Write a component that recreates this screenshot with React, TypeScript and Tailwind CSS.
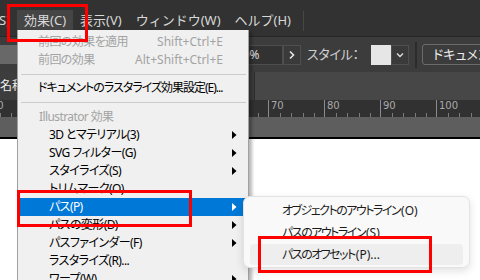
import React from 'react';

const ui = "font-['Noto_Sans','Noto_Sans_CJK_JP',sans-serif]";
const palt = "[font-feature-settings:'palt']";

function Arrow({ white }: { white?: boolean }) {
  return (
    <svg width="5" height="8" viewBox="0 0 5 8" className="absolute right-[9px] top-[5px]">
      <polygon points="0,0 4.5,4 0,8" fill={white ? '#ffffff' : '#000000'} />
    </svg>
  );
}

type Item =
  | { kind: 'sep'; h: number }
  | { kind: 'item'; label: string; indent?: boolean; disabled?: boolean; shortcut?: string; sub?: boolean; active?: boolean; header?: boolean; tight?: boolean };

const items: Item[] = [
  { kind: 'item', label: '前回の効果を適用', disabled: true, shortcut: 'Shift+Ctrl+E' },
  { kind: 'item', label: '前回の効果', disabled: true, shortcut: 'Alt+Shift+Ctrl+E' },
  { kind: 'sep', h: 10 },
  { kind: 'item', label: 'ドキュメントのラスタライズ効果設定(E)...', tight: true },
  { kind: 'sep', h: 11 },
  { kind: 'item', label: 'Illustrator 効果', header: true, disabled: true },
  { kind: 'item', label: '3D とマテリアル(3)', indent: true, sub: true },
  { kind: 'item', label: 'SVG フィルター(G)', indent: true, sub: true },
  { kind: 'item', label: 'スタイライズ(S)', indent: true, sub: true },
  { kind: 'item', label: 'トリムマーク(O)', indent: true },
  { kind: 'item', label: 'パス(P)', indent: true, sub: true, active: true },
  { kind: 'item', label: 'パスの変形(D)', indent: true, sub: true },
  { kind: 'item', label: 'パスファインダー(F)', indent: true, sub: true },
  { kind: 'item', label: 'ラスタライズ(R)...', indent: true },
  { kind: 'item', label: 'ワープ(W)', indent: true, sub: true },
];

const subItems = [
  { kana: 'オブジェクトのアウトライン', rest: '(O)' },
  { kana: 'パスのアウトライン', rest: '(S)' },
  { kana: 'パスのオフセット', rest: '(P)...', hover: true },
];

function RulerSegment({ label }: { label: string }) {
  return (
    <div className="relative w-[56px] shrink-0 h-full border-l border-[#8c8c8c]">
      <span className="block pl-[2px] pt-[1px] text-[10px] leading-[10px] text-[#a9a9a9] font-['DejaVu_Sans',sans-serif]">
        {label}
      </span>
      <svg width="56" height="4" className="absolute left-0 bottom-0">
        {[11, 22, 34, 45].map((x) => (
          <rect key={x} x={x} y={0} width={1} height={4} fill="#7a7a7a" />
        ))}
      </svg>
    </div>
  );
}

export default function App() {
  return (
    <div className={`relative w-[480px] h-[280px] overflow-hidden bg-white ${ui}`}>
      {/* menu bar */}
      <div className="h-[36px] bg-[#323232] text-[13px] text-[#d8d8d8] whitespace-nowrap">
        <div className="h-[31px] flex items-end">
          <div className="h-[21px] flex items-center ml-[-1px] pr-[7px]">S)</div>
          <div className="h-[21px] flex items-center px-[7px] bg-[#454545]">効果(C)</div>
          <div className="h-[21px] flex items-center px-[7px]">表示(V)</div>
          <div className="h-[21px] flex items-center px-[7px]">ウィンドウ(W)</div>
          <div className="h-[21px] flex items-center px-[7px]">ヘルプ(H)</div>
          <div className="h-[20px] w-px bg-[#474747] ml-[5px] self-center mt-[10px]" />
        </div>
      </div>
      <div className="h-px bg-[#262626]" />

      {/* control bar */}
      <div className="h-[35px] bg-[#3c3c3c] flex items-center text-[13px] text-[#cfcfcf] whitespace-nowrap">
        <div className="shrink-0 w-[17px] h-[19px] bg-[#686868]" />
        <div className="shrink-0 ml-[205px] w-[61px] h-[20px] bg-[#323232] border border-[#4d4d4d] flex items-center pl-[6px] text-[12px] text-[#dedede]">
          100%
        </div>
        <div className="shrink-0 w-[18px] h-[20px] bg-[#3a3a3a] border border-[#4f4f4f] flex items-center justify-center">
          <svg width="8" height="10" viewBox="0 0 8 10">
            <path d="M2 1.5 L5.5 5 L2 8.5" stroke="#e6e6e6" strokeWidth="1.6" fill="none" />
          </svg>
        </div>
        <div className={`shrink-0 ml-[6px] w-[58px] ${palt} tracking-[-0.3px]`}>スタイル：</div>
        <div className="shrink-0 ml-[6px] w-[20px] h-[20px] bg-[#e6e6e6]" />
        <div className="shrink-0 w-[18px] h-[20px] bg-[#3a3a3a] border border-[#4f4f4f] flex items-center justify-center">
          <svg width="8" height="6" viewBox="0 0 8 6">
            <path d="M1 1.5 L4 4.5 L7 1.5" stroke="#e0e0e0" strokeWidth="1.3" fill="none" />
          </svg>
        </div>
        <div className="shrink-0 ml-[6px] w-[2px] h-[26px] bg-[#2c2c2c]" />
        <div className={`shrink-0 ml-[5px] h-[21px] pl-[10px] pr-[10px] border border-[#6b6b6b] rounded-[3px] flex items-center text-[#ececec] text-[13px] ${palt}`}>
          ドキュメント設定
        </div>
      </div>

      {/* document tab row */}
      <div className="h-[28px] bg-[#474747] flex">
        <div className={`w-[255px] h-full bg-[#3d3d3d] border-r border-[#2c2c2c] flex items-center whitespace-nowrap overflow-hidden text-[12px] text-[#f0f0f0] ${palt}`}>
          名称未設定-1 @ 100 %
        </div>
      </div>

      {/* ruler */}
      <div className="h-[17px] bg-[#313131] flex overflow-hidden">
        <div className="ml-[-12px] flex h-full">
          {['20', '30', '40', '50', '60', '70', '80', '90', '100'].map((l) => (
            <RulerSegment key={l} label={l} />
          ))}
        </div>
      </div>
      <div className="h-[20px] bg-[#5e5e5e]" />
      <div className="h-[2px] bg-black" />

      {/* effect menu */}
      <div className="absolute left-[17px] top-[30px] w-[232px] h-[262px] bg-[#f0f0f0] border-x border-[#a0a0a0] pt-[3px] px-[2px] shadow-[3px_2px_3px_rgba(0,0,0,0.28)] text-[12px]">
        {items.map((it, i) =>
          it.kind === 'sep' ? (
            <div key={i} className="flex items-center" style={{ height: it.h }}>
              <div className="h-px w-full bg-[#cbcbcb] ml-[1px]" />
            </div>
          ) : (
            <div
              key={i}
              className={`relative h-[18px] flex items-center whitespace-nowrap ${palt} ${
                it.tight ? 'tracking-[-1px]' : 'tracking-[-0.6px]'
              } ${
                it.active ? 'bg-[#0078d7] text-white' : it.disabled ? 'text-[#a3a3a3]' : 'text-black'
              } ${it.indent ? 'pl-[29px]' : it.header ? 'pl-[19px]' : 'pl-[18px]'}`}
            >
              <span>{it.label}</span>
              {it.shortcut && (
                <span className="absolute right-[23px] top-0 h-[18px] flex items-center tracking-normal">
                  {it.shortcut}
                </span>
              )}
              {it.sub && <Arrow white={it.active} />}
            </div>
          )
        )}
      </div>

      {/* path submenu */}
      <div className={`absolute left-[243px] top-[196px] w-[227px] h-[72px] bg-[#f9f9f9] border border-[#e3e3e3] rounded-[7px] shadow-[0_3px_8px_rgba(0,0,0,0.12)] pt-[3px] text-[12px] text-[#1b1b1b] whitespace-nowrap ${palt}`}>
        {subItems.map((s) => (
          <div
            key={s.kana}
            className={`mx-[6px] pl-[32px] flex items-center ${s.hover ? 'h-[21px] bg-[#eeeeee] rounded-[4px]' : 'h-[22px]'}`}
          >
            <span className="tracking-[-1.5px]">{s.kana}</span>
            <span className="ml-[1px]">{s.rest}</span>
          </div>
        ))}
      </div>

      {/* red callouts */}
      <div className="absolute left-[7px] top-[4px] w-[81px] h-[38px] border-[3px] border-[#ff0000]" />
      <div className="absolute left-[17px] top-[190px] w-[175px] h-[37px] border-[3px] border-[#ff0000]" />
      <div className="absolute left-[258px] top-[236px] w-[174px] h-[37px] border-[3px] border-[#ff0000]" />
    </div>
  );
}
